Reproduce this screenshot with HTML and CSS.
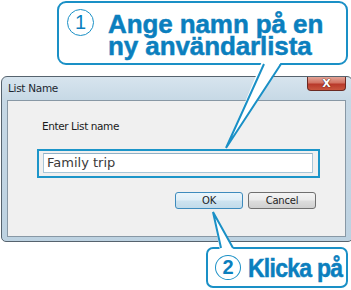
FILE: index.html
```html
<!DOCTYPE html>
<html>
<head>
<meta charset="utf-8">
<link rel="stylesheet" href="styles.css">
</head>
<body>
<div class="page">
  <div class="window">
    <div class="titlebar">
      <span class="title">List Name</span>
      <span class="close">X</span>
    </div>
    <div class="client">
      <div class="label">Enter List name</div>
      <div class="highlight">
        <div class="input">Family trip</div>
      </div>
      <div class="buttons">
        <span class="btn btn-default">OK</span>
        <span class="btn">Cancel</span>
      </div>
    </div>
  </div>

  <div class="callout callout-1">
    <span class="num num-1">1</span>
    <div class="ctext">
      <div class="cline">Ange namn på en</div>
      <div class="cline">ny användarlista</div>
    </div>
  </div>
  <div class="callout callout-2">
    <span class="num num-2">2</span>
    <div class="ctext ctext-2">Klicka på</div>
  </div>

  <svg class="pointers" width="351" height="290" viewBox="0 0 351 290">
    <polygon points="262.5,60 226,148 282.5,60" fill="#fff"/>
    <path d="M264,64 L226,148 L281,64" fill="none" stroke="#1a90c6" stroke-width="2" stroke-linejoin="miter"/>
    <polygon points="220,251 213,212 234.5,251" fill="#fff"/>
    <path d="M221,248 L213,212 L233,248" fill="none" stroke="#1a90c6" stroke-width="2"/>
  </svg>
</div>
</body>
</html>
```

FILE: styles.css
```css
html, body {
  margin: 0;
  padding: 0;
  background: #fff;
}

.page {
  position: relative;
  width: 351px;
  height: 290px;
  overflow: hidden;
  background: #fff;
  font-family: "Liberation Sans", Arial, sans-serif;
}

/* ---------- Window ---------- */
.window {
  margin-top: 76px;
  margin-left: 1px;
  width: 352px;
  height: 166px;
  box-sizing: border-box;
  border: 1px solid #56636e;
  border-radius: 6px 6px 5px 5px;
  background: linear-gradient(to bottom, #d7e4ee 0px, #c6d8e5 24px, #bdd2e1 100%);
  display: flex;
  flex-direction: column;
}

.titlebar {
  height: 23px;
  display: flex;
  align-items: flex-start;
  justify-content: space-between;
}

.title {
  margin-left: 6px;
  margin-top: 5px;
  font-family: "DejaVu Sans", sans-serif;
  font-size: 10.5px;
  letter-spacing: -0.3px;
  color: #1c2630;
}

.close {
  margin-right: 6px;
  width: 39px;
  height: 14px;
  box-sizing: border-box;
  border: 1px solid #6a2a22;
  border-top: none;
  border-radius: 0 0 4px 4px;
  background: linear-gradient(to bottom, #e3a497 0%, #d27262 45%, #b8392a 55%, #c9563f 100%);
  color: #fff;
  font-family: "DejaVu Sans", sans-serif;
  font-weight: bold;
  font-size: 11px;
  line-height: 13px;
  text-align: center;
  text-shadow: 0 0 1px #4a1510, 0 0 1px #4a1510;
}

.client {
  margin: 0 6px 4px 5px;
  flex: 1;
  border: 1px solid #8898a5;
  background: #f0f0f0;
}

.label {
  margin-top: 18px;
  padding-left: 34px;
  font-family: "DejaVu Sans", sans-serif;
  font-size: 10.5px;
  letter-spacing: -0.4px;
  line-height: 14px;
  color: #1b1b1b;
}

.highlight {
  margin-top: 16px;
  margin-left: 29px;
  width: 283px;
  height: 29px;
  box-sizing: border-box;
  border: 2px solid #1c95c9;
  background: #f0f0f0;
  padding: 2px 0 0 4px;
}

.input {
  width: 270px;
  height: 20px;
  box-sizing: border-box;
  border: 1px solid #a9c6d8;
  border-top-color: #8fb0c6;
  background: #fff;
  padding-left: 3px;
  font-family: "DejaVu Sans", sans-serif;
  font-size: 13px;
  line-height: 18px;
  color: #3a3a3a;
}

.buttons {
  margin-top: 14px;
  padding-right: 29px;
  display: flex;
  justify-content: flex-end;
  gap: 5px;
}

.btn {
  width: 68px;
  height: 17px;
  box-sizing: border-box;
  border: 1px solid #707070;
  border-radius: 3px;
  background: linear-gradient(to bottom, #f4f4f4 0%, #ebebeb 48%, #dddddd 52%, #d0d0d0 100%);
  font-family: "DejaVu Sans", sans-serif;
  font-size: 10px;
  letter-spacing: -0.2px;
  line-height: 15px;
  text-align: center;
  color: #1e1e1e;
}

.btn-default {
  border-color: #3d8bbd;
  background: linear-gradient(to bottom, #eaf5fb 0%, #dfeef7 48%, #cde3f0 52%, #c1dbea 100%);
}

/* ---------- Callouts ---------- */
.callout {
  position: absolute;
  box-sizing: border-box;
  border: 2px solid #1a90c6;
  background: #fff;
  display: flex;
  align-items: flex-start;
  color: #0b7fbe;
}

.callout-1 {
  left: 57px;
  top: 1px;
  width: 291px;
  height: 64px;
  border-radius: 9px;
  padding: 6px 0 0 8px;
}

.callout-2 {
  left: 206px;
  top: 247px;
  width: 142px;
  height: 41px;
  border-radius: 7px;
  padding: 6px 0 0 7px;
}

.num {
  flex: none;
  box-sizing: border-box;
  border: 1.5px solid #1a90c6;
  border-radius: 50%;
  text-align: center;
  font-family: "Liberation Sans", Arial, sans-serif;
}

.num-1 {
  width: 27px;
  height: 27px;
  font-size: 20px;
  line-height: 24px;
}

.num-2 {
  width: 26px;
  height: 25px;
  font-size: 20px;
  font-weight: bold;
  line-height: 23px;
}

.ctext {
  margin-left: 14px;
  margin-top: 2px;
  font-size: 26px;
  font-weight: bold;
  letter-spacing: -0.1px;
  -webkit-text-stroke: 0.5px #0b7fbe;
  white-space: nowrap;
}

.cline {
  height: 22px;
  line-height: 26px;
}

.ctext-2 {
  margin-left: 7px;
  margin-top: 3px;
  font-size: 25px;
  line-height: 21px;
  letter-spacing: -0.8px;
  transform: scaleX(0.92);
  transform-origin: left top;
}

.pointers {
  position: absolute;
  left: 0;
  top: 0;
  pointer-events: none;
}
```
